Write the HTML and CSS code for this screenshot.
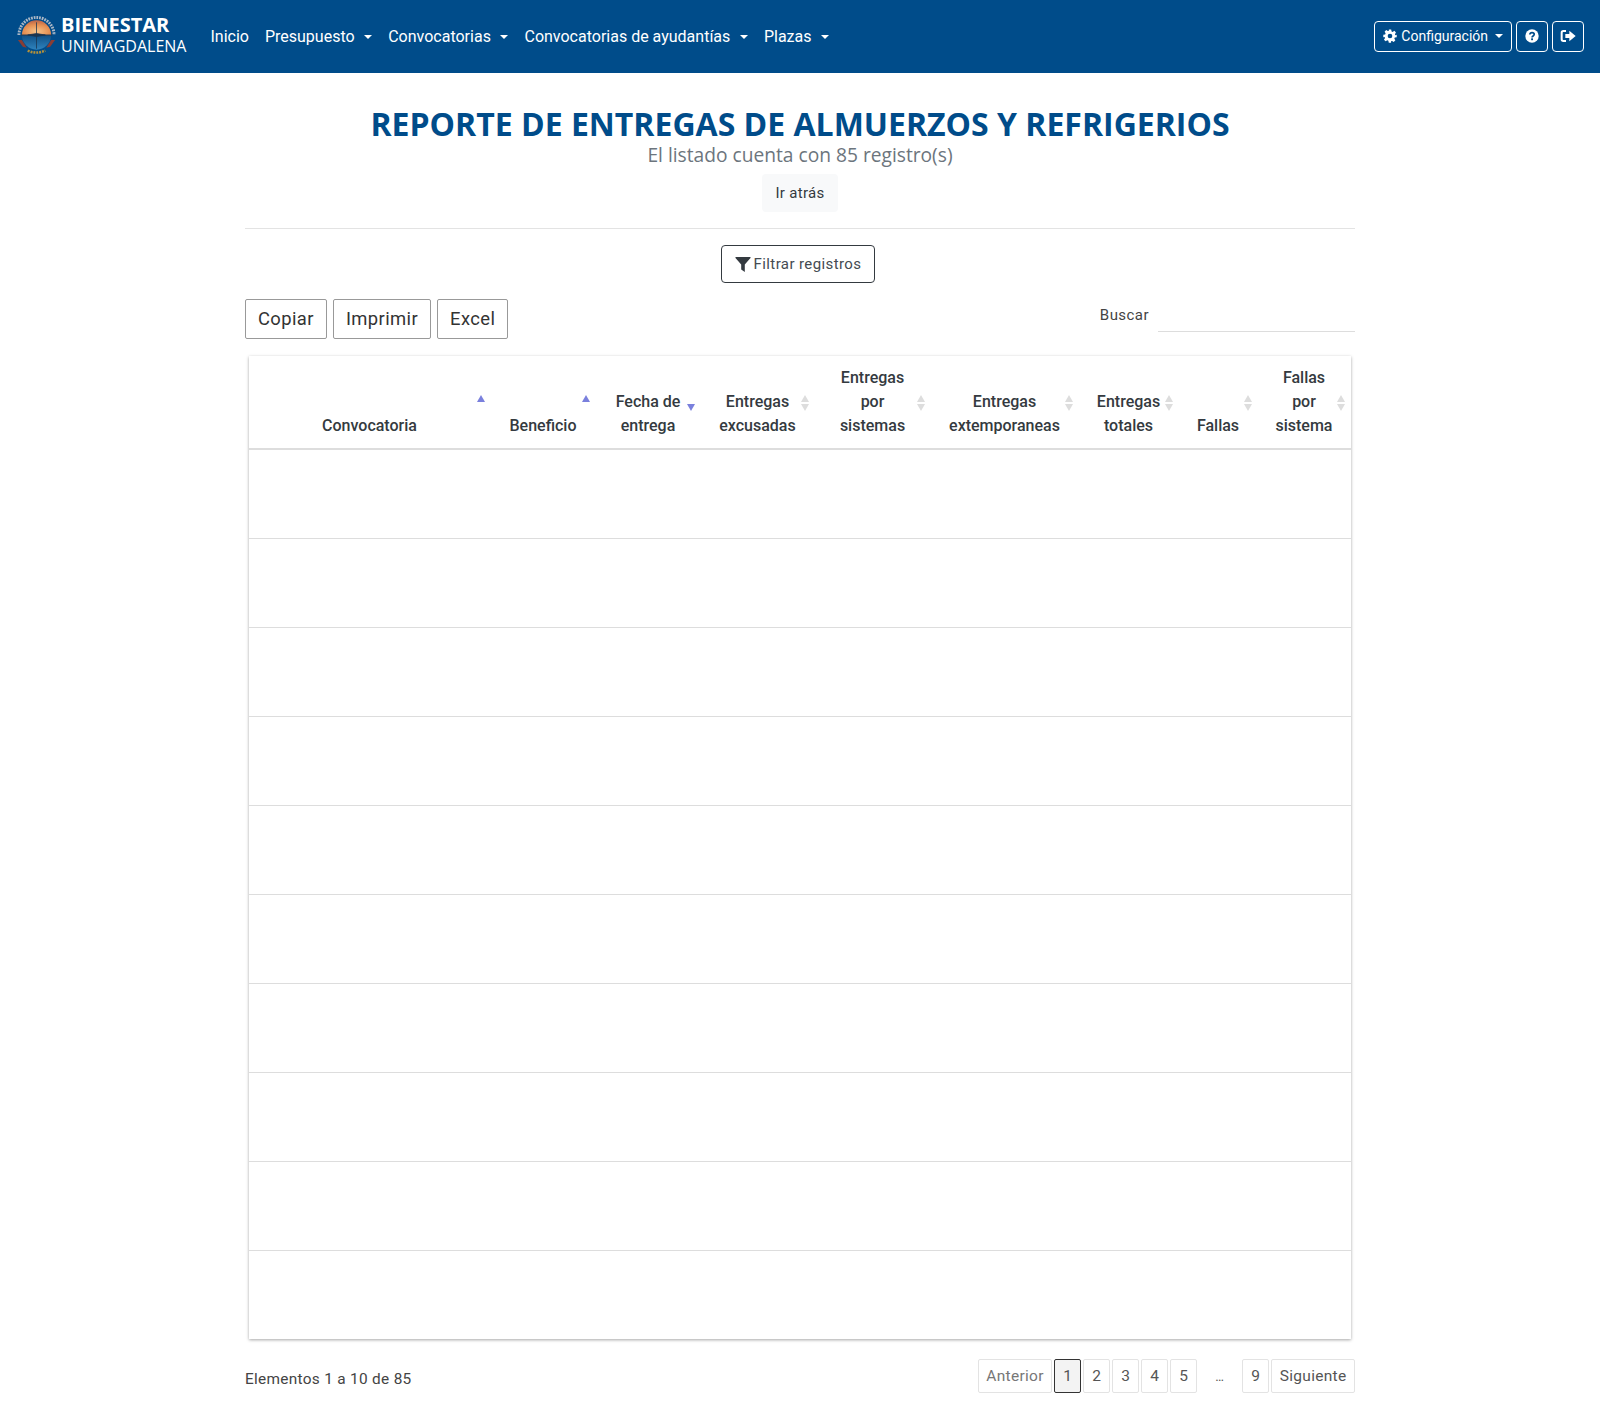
FILE: index.html
```html
<!DOCTYPE html>
<html lang="es">
<head>
<meta charset="utf-8">
<title>Reporte de entregas</title>
<link rel="stylesheet" href="styles.css">
</head>
<body>
<nav class="navbar">
  <a class="brand">
    <svg class="logo" viewBox="0 0 42 42" aria-hidden="true">
      <defs>
        <radialGradient id="sun" cx=".5" cy=".75" r=".75"><stop offset="0" stop-color="#f7c48a"/><stop offset=".6" stop-color="#e58f52"/><stop offset="1" stop-color="#b9634a"/></radialGradient>
        <linearGradient id="sea" x1="0" y1="0" x2="0" y2="1"><stop offset="0" stop-color="#0f4f85"/><stop offset="1" stop-color="#2f83bd"/></linearGradient>
      </defs>
      <path d="M3 21a18 18 0 0 1 36 0" fill="none" stroke="#a9b7c6" stroke-width="3" stroke-dasharray="1.800 1"/>
      <path d="M6 21a15 15 0 0 1 30 0z" fill="url(#sun)"/>
      <path d="M6 21a15 15 0 0 0 30 0z" fill="url(#sea)"/>
      <path d="M5 21h32" stroke="#26384a" stroke-width="1"/>
      <path d="M21 8v27M12 21l9-1.500 9 1.500-9 1.500z" stroke="#1b3550" stroke-width=".8" fill="#1b3550"/>
      <path d="M2 26l5 7 4 1-5-8zM40 26l-5 7-4 1 5-8z" fill="#8a3d35"/>
      <path d="M12 37q9 4 18 0" fill="none" stroke="#b5923a" stroke-width="2.600" stroke-dasharray="2 1"/>
    </svg>
    <span class="brand-text"><b>BIENESTAR</b><span>UNIMAGDALENA</span></span>
  </a>
  <ul class="menu">
    <li>Inicio</li>
    <li class="caret">Presupuesto</li>
    <li class="caret">Convocatorias</li>
    <li class="caret">Convocatorias de ayudantías</li>
    <li class="caret">Plazas</li>
  </ul>
  <div class="nav-actions">
    <button class="nav-btn caret">
      <svg class="ico" viewBox="0 0 24 24" aria-hidden="true"><path fill-rule="evenodd" fill="#fff" d="M10 1h4l.7 3.200 1.900.8 2.800-1.800 2.800 2.800-1.800 2.800.8 1.900L23.500 10v4l-3.300.7-.8 1.900 1.800 2.800-2.800 2.800-2.800-1.800-1.900.8L13.900 23.500h-4l-.7-3.300-1.900-.8-2.800 1.800-2.800-2.800 1.800-2.800-.8-1.900L.5 14v-4l3.200-.7.8-1.900-1.800-2.800 2.800-2.800 2.800 1.800 1.900-.8zM12 8a4 4 0 1 0 0 8 4 4 0 0 0 0-8z"/></svg>
      Configuración
    </button>
    <button class="nav-btn square" aria-label="Ayuda">
      <svg class="ico" viewBox="0 0 24 24" aria-hidden="true"><circle cx="12" cy="12" r="11.500" fill="#fff"/><path d="M8.300 9.500c.2-2.200 1.800-3.400 3.800-3.400s3.700 1.200 3.700 3.100c0 2.700-3.700 2.700-3.700 5.200" fill="none" stroke="#004c8a" stroke-width="2.900"/><rect x="10.500" y="16" width="3.200" height="3.200" fill="#004c8a"/></svg>
    </button>
    <button class="nav-btn square" aria-label="Salir">
      <svg class="ico ico-wide" viewBox="0 0 24 24" aria-hidden="true"><path fill="#fff" d="M9 3H5a4 4 0 0 0-4 4v10a4 4 0 0 0 4 4h4v-3H5a1 1 0 0 1-1-1V7a1 1 0 0 1 1-1h4zM14 4l9.500 8-9.500 8v-5H8V9h6z"/></svg>
    </button>
  </div>
</nav>

<main class="container">
  <header class="head">
    <h1>REPORTE DE ENTREGAS DE ALMUERZOS Y REFRIGERIOS</h1>
    <p class="sub">El listado cuenta con 85 registro(s)</p>
    <button class="back">Ir atrás</button>
  </header>
  <hr class="rule">
  <div class="filter-row">
    <button class="filter">
      <svg class="ico-filter" viewBox="0 0 16 16" aria-hidden="true"><path fill="#343a40" d="M.5 1h15v1L9.800 8.500V16L6.200 13.500V8.500L.5 2z"/></svg>
      Filtrar registros
    </button>
  </div>
  <div class="tools">
    <div class="export">
      <button>Copiar</button>
      <button>Imprimir</button>
      <button>Excel</button>
    </div>
    <label class="search">Buscar <input type="search" aria-label="Buscar"></label>
  </div>

  <div class="table-wrap">
    <table class="data">
      <colgroup>
        <col class="c1"><col class="c2"><col class="c3"><col class="c4"><col class="c5"><col class="c6"><col class="c7"><col class="c8"><col class="c9">
      </colgroup>
      <thead>
        <tr>
          <th class="s-asc">Convocatoria</th>
          <th class="s-asc">Beneficio</th>
          <th class="s-desc">Fecha de<br>entrega</th>
          <th class="s-none">Entregas<br>excusadas</th>
          <th class="s-none">Entregas<br>por<br>sistemas</th>
          <th class="s-none">Entregas<br>extemporaneas</th>
          <th class="s-none">Entregas<br>totales</th>
          <th class="s-none">Fallas</th>
          <th class="s-none">Fallas<br>por<br>sistema</th>
        </tr>
      </thead>
      <tbody>
        <tr><td colspan="9"></td></tr>
        <tr><td colspan="9"></td></tr>
        <tr><td colspan="9"></td></tr>
        <tr><td colspan="9"></td></tr>
        <tr><td colspan="9"></td></tr>
        <tr><td colspan="9"></td></tr>
        <tr><td colspan="9"></td></tr>
        <tr><td colspan="9"></td></tr>
        <tr><td colspan="9"></td></tr>
        <tr><td colspan="9"></td></tr>
      </tbody>
    </table>
  </div>

  <div class="foot">
    <span class="info">Elementos 1 a 10 de 85</span>
    <div class="pager">
      <a class="prev">Anterior</a>
      <a class="current">1</a>
      <a>2</a>
      <a>3</a>
      <a>4</a>
      <a>5</a>
      <span class="dots">…</span>
      <a>9</a>
      <a>Siguiente</a>
    </div>
  </div>
</main>
</body>
</html>
```

FILE: styles.css
```css
* { box-sizing: border-box; }
html, body { margin: 0; padding: 0; }
body {
  font-family: Roboto, "Liberation Sans", sans-serif;
  font-size: 16px;
  color: #343a40;
  background: #fff;
}
button { font-family: inherit; cursor: pointer; }

.navbar {
  height: 73px;
  background: #004c8a;
  color: #fff;
  display: flex;
  align-items: center;
  padding: 0 16px;
}
.brand { display: flex; align-items: center; gap: 4px; margin-right: 16px; }
.logo { width: 41px; height: 42px; flex: none; margin-bottom: 4px; }
.brand-text {
  display: flex;
  flex-direction: column;
  font-family: "Open Sans", sans-serif;
  line-height: 21px;
  font-size: 16px;
  padding-bottom: 3px;
}
.brand-text b { font-size: 20px; font-weight: 700; margin-bottom: 1px; }
.menu {
  list-style: none;
  display: flex;
  margin: 0;
  padding: 0;
  font-weight: 400;
  font-size: 16px;
}
.menu li { padding: 0 8px; white-space: nowrap; }
.caret::after {
  content: "";
  display: inline-block;
  margin-left: 9.600px;
  vertical-align: 3px;
  border-top: 4.500px solid currentColor;
  border-left: 4.500px solid transparent;
  border-right: 4.500px solid transparent;
}
.nav-actions { margin-left: auto; display: flex; gap: 4px; }
.nav-btn {
  height: 31px;
  border: 1px solid #fff;
  border-radius: 4px;
  background: transparent;
  color: #fff;
  font-size: 14px;
  font-weight: 400;
  padding: 0 8px 2px;
  display: flex;
  align-items: center;
  gap: 4px;
}
.nav-btn.caret::after { margin-left: 3px; vertical-align: 0; }
.nav-btn.square { width: 32px; padding: 0 0 2px; justify-content: center; }
.ico { width: 14px; height: 14px; flex: none; }
.ico-wide { width: 16px; height: 16px; }

.container { width: 1140px; margin: 0 auto; padding: 0 15px; }
.head { text-align: center; padding-top: 32px; }
h1 {
  margin: 0;
  font-family: "Open Sans", sans-serif;
  font-size: 32px;
  font-weight: 700;
  line-height: 38px;
  color: #004c8a;
}
.sub {
  margin: 0;
  font-family: "Open Sans", sans-serif;
  font-size: 19.200px;
  line-height: 24px;
  color: #6c757d;
}
.back {
  margin-top: 7px;
  height: 38px;
  width: 76px;
  border: 0;
  border-radius: 4px;
  background: #f8f9fa;
  color: #343a40;
  font-size: 15px;
  letter-spacing: .3px;
  padding: 0;
}
.rule { border: 0; border-top: 1px solid #e3e3e3; margin: 16px 0; }
.filter-row { display: flex; justify-content: center; padding-right: 4px; }
.filter {
  height: 38px;
  width: 154px;
  border: 1px solid #343a40;
  border-radius: 4px;
  background: #fff;
  color: #444b52;
  font-size: 15px;
  letter-spacing: .4px;
  display: flex;
  align-items: center;
  justify-content: center;
  gap: 3px;
  padding: 0 0 1px;
}
.ico-filter { width: 16px; height: 16px; }
.tools {
  margin-top: 16px;
  display: flex;
  justify-content: space-between;
  align-items: flex-start;
}
.export { display: flex; gap: 6px; }
.export button {
  height: 40px;
  padding: 0 12px 2px;
  border: 1px solid #999;
  border-radius: 2px;
  background: #fff;
  color: #333;
  font-size: 18.400px;
  font-weight: 400;
  letter-spacing: .4px;
}
.search { display: flex; align-items: center; gap: 9px; height: 33px; color: #444; font-size: 15px; letter-spacing: .45px; padding-bottom: 2px; }
.search input {
  width: 197px;
  height: 33px;
  margin-bottom: -2px;
  border: 0;
  border-bottom: 1px solid #ddd;
  outline: 0;
  background: transparent;
}
.table-wrap {
  margin: 17px 4px 0;
  box-shadow: 0 1px 3px rgba(0, 0, 0, .35);
}
.data { width: 1102px; table-layout: fixed; border-collapse: collapse; }
.c1 { width: 242px; }
.c2 { width: 105px; }
.c3 { width: 105px; }
.c4 { width: 114px; }
.c5 { width: 116px; }
.c6 { width: 148px; }
.c7 { width: 100px; }
.c8 { width: 79px; }
.c9 { width: 93px; }
.data th {
  position: relative;
  padding: 10px 1px 10px 0;
  vertical-align: bottom;
  text-align: center;
  font-size: 16px;
  font-weight: 500;
  line-height: 24px;
  color: #343a40;
  border-bottom: 2px solid #ddd;
}
.data th::before, .data th::after {
  content: "";
  position: absolute;
  right: 6px;
  border-left: 4.500px solid transparent;
  border-right: 4.500px solid transparent;
}
.s-asc::before { top: 39px; border-bottom: 7px solid #7a80dd; }
.s-desc::after { top: 48px; border-top: 7px solid #7a80dd; }
.s-none::before { top: 39px; border-bottom: 7px solid #ddd; }
.s-none::after { top: 48px; border-top: 7px solid #ddd; }
.data td { height: 89px; padding: 0; border-bottom: 1px solid #ddd; }
.data tr:last-child td { border-bottom: 0; }
.foot {
  margin-top: 20px;
  display: flex;
  justify-content: space-between;
  align-items: center;
  padding-bottom: 17px;
}
.info { font-size: 15.400px; letter-spacing: .3px; color: #444; padding-top: 5px; }
.pager { display: flex; gap: 2px; font-size: 15.500px; letter-spacing: .3px; color: #555; }
.pager a, .pager .dots {
  height: 34px;
  min-width: 27px;
  padding: 0 7.500px;
  display: flex;
  align-items: center;
  justify-content: center;
  border: 1px solid #e3e3e3;
  border-radius: 2px;
}
.pager .prev { color: #777; }
.pager .current { background: #f3f3f3; border-color: #333; }
.pager .dots { border-color: transparent; width: 41px; font-size: 13px; }
```
